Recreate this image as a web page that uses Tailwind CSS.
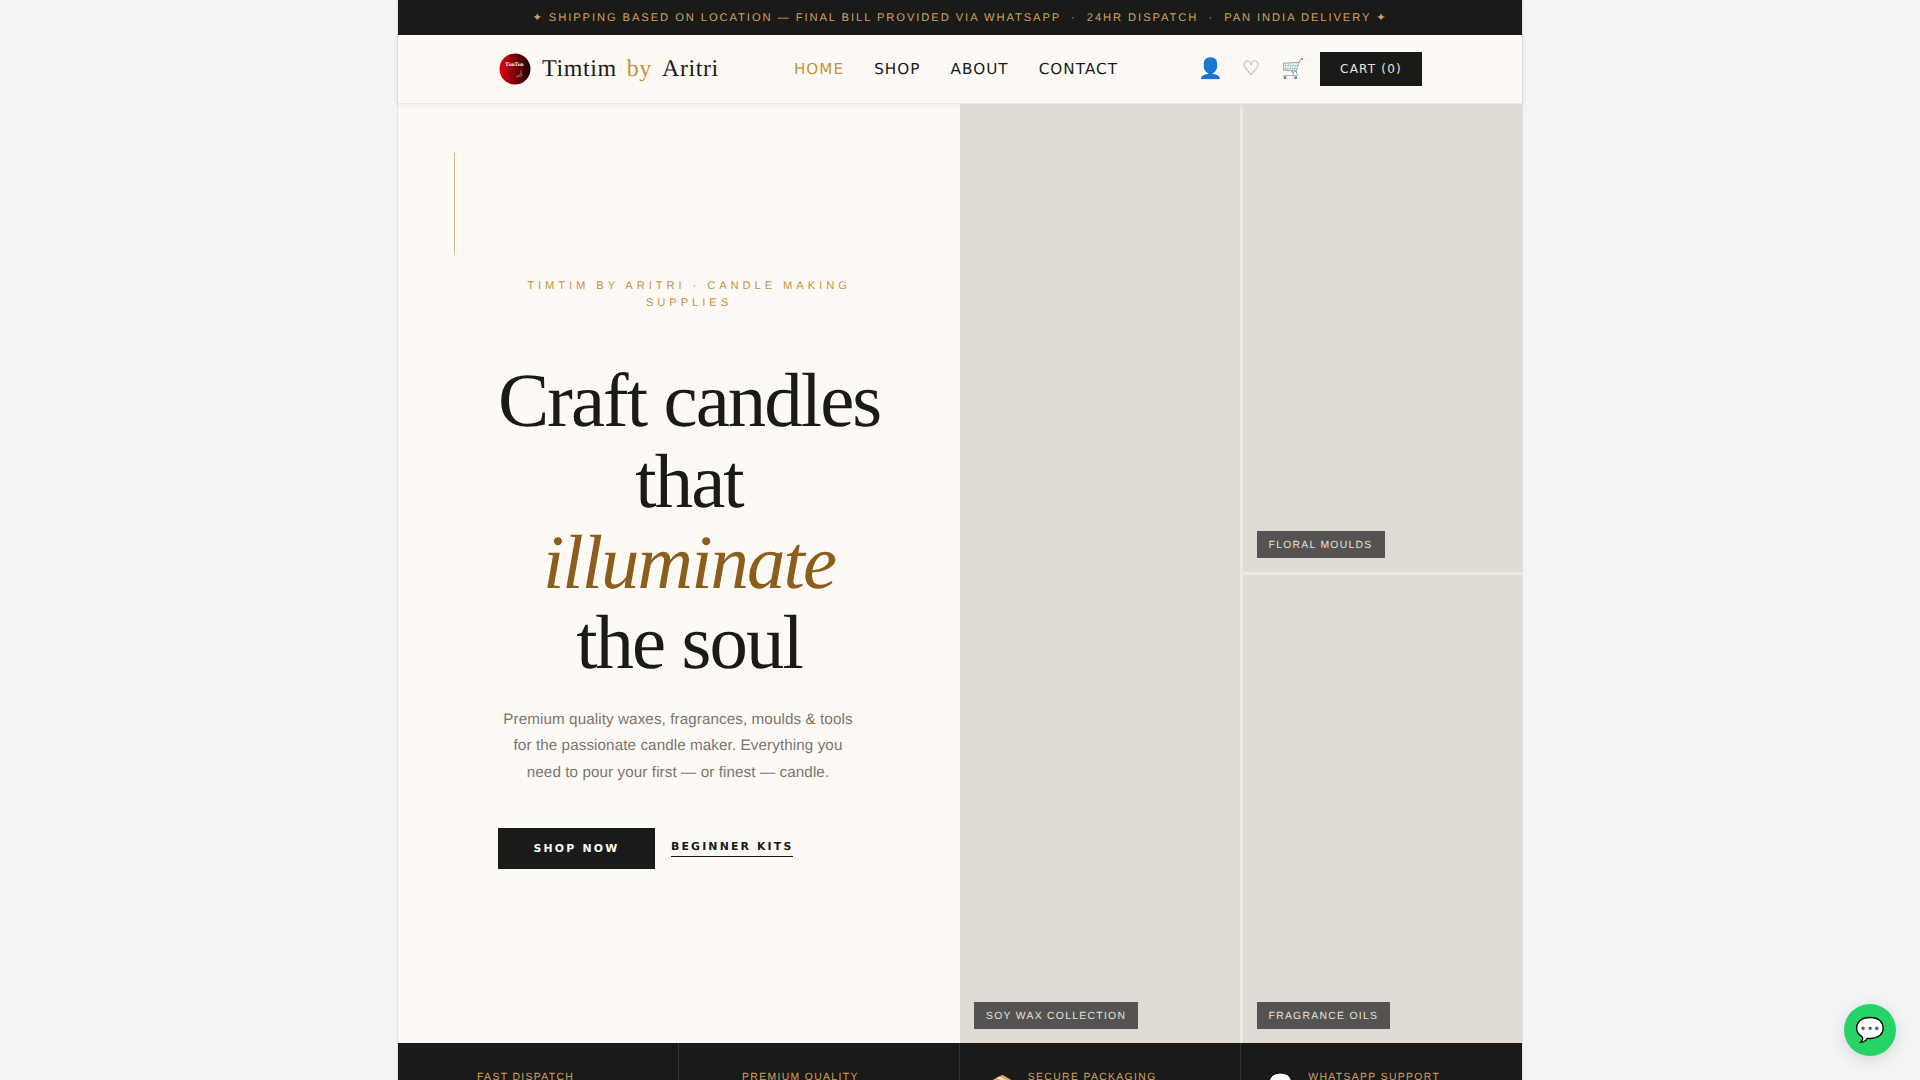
<!DOCTYPE html>
<html lang="en">
<head>
  <meta charset="UTF-8">
  <title>Timtim by Aritri</title>
  <script src="https://cdn.jsdelivr.net/npm/@tailwindcss/browser@4"></script>
</head>
<body class="bg-[#f3f4f6] h-[1080px] overflow-hidden font-['Liberation_Sans',sans-serif] [text-rendering:geometricPrecision]">
  <div class="relative w-[1124px] mx-auto bg-[#fdfaf5] shadow-[0_0_2px_rgba(0,0,0,0.2)]">
    <!-- announcement -->
    <div class="h-[35px] pt-[2px] bg-[#1a1a18] flex items-center justify-center text-[11.2px] tracking-[1.92px] text-[#cfa35f] whitespace-pre">✦ SHIPPING BASED ON LOCATION — FINAL BILL PROVIDED VIA WHATSAPP  ·  24HR DISPATCH  ·  PAN INDIA DELIVERY ✦</div>

    <!-- nav -->
    <nav class="h-[69px] flex items-center px-[100px] border-b border-[#ece8e2] shadow-[0_1px_6px_rgba(0,0,0,0.08)] relative">
      <div class="flex items-center gap-[11px] ml-px">
        <svg class="w-8 h-8" viewBox="0 0 32 32">
          <defs>
            <linearGradient id="logo" x1="0" y1="0" x2="1" y2="0">
              <stop offset="0" stop-color="#e0000f"/>
              <stop offset="1" stop-color="#1a0004"/>
            </linearGradient>
          </defs>
          <circle cx="16" cy="16" r="15.5" fill="url(#logo)"/>
          <text x="15.5" y="13" text-anchor="middle" font-size="5.2" font-weight="700" fill="#fff" font-family="Liberation Serif">TimTim</text>
          <path d="M17 24c2-1 4-2 5-4M22 17v6M18 23c2 1 4 0 6-1" stroke="#b99" stroke-width="0.6" fill="none"/>
        </svg>
        <div class="font-['Liberation_Serif',serif] text-[24px] tracking-[0.6px] text-[#1a1a18] flex gap-[10px] mb-px"><span>Timtim</span><span class="text-[#c8903f]">by</span><span>Aritri</span></div>
      </div>
      <div class="flex items-center gap-[30px] text-[15.2px] tracking-[1.05px] text-[#1a1a18] font-['DejaVu_Sans',sans-serif] ml-[75px]">
        <a class="text-[#c8903f]">HOME</a>
        <a>SHOP</a>
        <a>ABOUT</a>
        <a>CONTACT</a>
      </div>
      <div class="flex items-center ml-auto">
        <span class="text-[20px] leading-none w-[22px] text-center">👤</span>
        <span class="text-[20px] leading-none w-[16px] text-center ml-[22px] text-[#888]">♡</span>
        <span class="text-[19px] leading-none w-[22px] text-center ml-[23px]">🛒</span>
        <button class="w-[102px] h-[34px] ml-[17px] bg-[#1a1a18] text-[#e8e4de] font-['DejaVu_Sans',sans-serif] text-[12px] tracking-[1.2px]">CART (0)</button>
      </div>
    </nav>

    <!-- hero -->
    <section class="grid grid-cols-2 h-[939px]">
      <div class="relative flex flex-col justify-center pl-[100px] pr-[80px]">
        <div class="absolute left-[56px] top-[49px] w-px h-[101px] bg-[#d9b48a]"></div>
        <p class="text-[11.2px] leading-[17px] tracking-[3.92px] text-[#c8903f] text-center mb-[49px]">TIMTIM BY ARITRI · CANDLE MAKING SUPPLIES</p>
        <h1 class="font-['Liberation_Serif',serif] text-[76.8px] leading-[80.6px] tracking-[-1.92px] text-[#1a1a18] text-center mb-[23px] whitespace-nowrap">Craft candles<br>that<br><em class="text-[#8b5e1e]">illuminate</em><br>the soul</h1>
        <p class="text-[15.2px] leading-[26.6px] tracking-[0.1px] text-[#7a756f] text-center w-[360px] mb-[41px]">Premium quality waxes, fragrances, moulds &amp; tools for the passionate candle maker. Everything you need to pour your first — or finest — candle.</p>
        <div class="flex items-center gap-4">
          <button class="w-[157px] h-[41px] pt-[2px] bg-[#1a1a18] text-[#fdfaf5] font-['DejaVu_Sans',sans-serif] text-[10.9px] font-bold tracking-[2.2px]">SHOP NOW</button>
          <a class="font-['DejaVu_Sans',sans-serif] text-[10.9px] leading-none font-bold tracking-[2.16px] text-[#1a1a18] border-b border-[#1a1a18] pb-[3px] mt-[2px]">BEGINNER KITS</a>
        </div>
      </div>
      <div class="grid grid-cols-2 grid-rows-2 gap-[3px] bg-[#ece8e2]">
        <div class="row-span-2 bg-[#e0dbd5] relative">
          <span class="absolute left-[14px] bottom-[14px] h-[27px] pt-[2px] px-3 flex items-center bg-[#1a1a18]/70 text-[#e6e1da] text-[10.4px] tracking-[1.28px]">SOY WAX COLLECTION</span>
        </div>
        <div class="bg-[#e0dbd5] relative">
          <span class="absolute left-[14px] bottom-[14px] h-[27px] pt-[2px] px-3 flex items-center bg-[#1a1a18]/70 text-[#e6e1da] text-[10.4px] tracking-[1.28px]">FLORAL MOULDS</span>
        </div>
        <div class="bg-[#e0dbd5] relative">
          <span class="absolute left-[14px] bottom-[14px] h-[27px] pt-[2px] px-3 flex items-center bg-[#1a1a18]/70 text-[#e6e1da] text-[10.4px] tracking-[1.28px]">FRAGRANCE OILS</span>
        </div>
      </div>
    </section>

    <!-- features -->
    <section class="grid grid-cols-4 h-[90px] bg-[#1a1a18] text-[10.4px] tracking-[1.35px] text-[#cfa35f]">
      <div class="border-r border-[#333] pt-[27px] pl-[79px]">FAST DISPATCH</div>
      <div class="border-r border-[#333] pt-[27px] pl-[63px]">PREMIUM QUALITY</div>
      <div class="border-r border-[#333] pt-[27px] pl-[31px] flex gap-[13px]"><span class="text-[18px] leading-none mt-[6px]">📦</span><span>SECURE PACKAGING</span></div>
      <div class="pt-[27px] pl-[27px] flex gap-[14px]"><span class="text-[20px] leading-none mt-[4px]">💬</span><span>WHATSAPP SUPPORT</span></div>
    </section>
  </div>

  <!-- whatsapp button -->
  <button class="fixed right-[24px] bottom-[24px] w-[52px] h-[52px] rounded-full bg-[#25d366] flex items-center justify-center text-[24px] leading-none shadow-[0_4px_16px_rgba(0,0,0,0.12)]">💬</button>
</body>
</html>
